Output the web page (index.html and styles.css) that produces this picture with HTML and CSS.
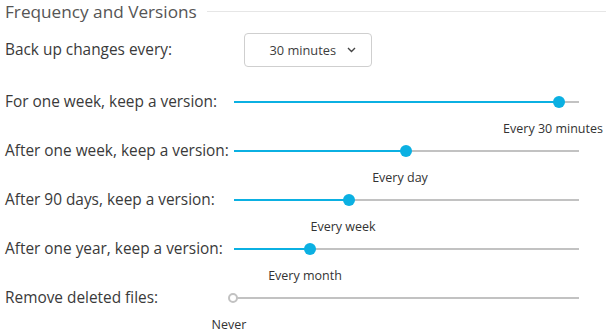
FILE: index.html
```html
<!DOCTYPE html>
<html lang="en">
<head>
  <meta charset="UTF-8">
  <title>Frequency and Versions</title>
  <link rel="stylesheet" href="styles.css">
</head>
<body>
  <main class="panel">
    <div class="head">
      <h2>Frequency and Versions</h2>
      <div class="rule"></div>
    </div>

    <div class="row row-select">
      <div class="label">Back up changes every:</div>
      <button class="select">
        <span>30 minutes</span>
        <svg width="9" height="6" viewBox="0 0 9 6"><path d="M1 1l3.5 3.5L8 1" fill="none" stroke="#444" stroke-width="1.4"/></svg>
      </button>
    </div>

    <div class="row">
      <div class="label">For one week, keep a version:</div>
      <div class="slider">
        <div class="fill" style="width: 325px"></div>
        <div class="thumb" style="left: 325px"></div>
        <div class="value" style="left: 319px">Every 30 minutes</div>
      </div>
    </div>

    <div class="row">
      <div class="label">After one week, keep a version:</div>
      <div class="slider">
        <div class="fill" style="width: 172px"></div>
        <div class="thumb" style="left: 172px"></div>
        <div class="value" style="left: 166px">Every day</div>
      </div>
    </div>

    <div class="row">
      <div class="label">After 90 days, keep a version:</div>
      <div class="slider">
        <div class="fill" style="width: 115px"></div>
        <div class="thumb" style="left: 115px"></div>
        <div class="value" style="left: 109px">Every week</div>
      </div>
    </div>

    <div class="row">
      <div class="label">After one year, keep a version:</div>
      <div class="slider">
        <div class="fill" style="width: 76px"></div>
        <div class="thumb" style="left: 76px"></div>
        <div class="value" style="left: 71px">Every month</div>
      </div>
    </div>

    <div class="row">
      <div class="label">Remove deleted files:</div>
      <div class="slider">
        <div class="thumb off" style="left: 0px"></div>
        <div class="value" style="left: -5px">Never</div>
      </div>
    </div>
  </main>
</body>
</html>
```

FILE: styles.css
```css
* {
  margin: 0;
  padding: 0;
  box-sizing: border-box;
}
body {
  background: #fff;
  font-family: "Open Sans", "Liberation Sans", sans-serif;
  color: #3a3a3a;
}
.panel {
  width: 606px;
  min-height: 336px;
  padding-left: 5px;
}
.head {
  height: 22px;
  display: flex;
  align-items: center;
  gap: 10px;
}
.head h2 {
  font-size: 17.2px;
  font-weight: 400;
  color: #555;
  white-space: nowrap;
}
.head .rule {
  flex: 1;
  height: 1px;
  background-color: #e6e6e6;
}
.row {
  height: 49px;
  display: flex;
  align-items: center;
}
.row-select {
  height: 55px;
}
.label {
  width: 229px;
  font-size: 15.4px;
  white-space: nowrap;
}
.select {
  margin-left: 10px;
  width: 128px;
  height: 34px;
  border: 1px solid #cfcfcf;
  border-radius: 4px;
  background: #fff;
  display: flex;
  align-items: center;
  justify-content: flex-end;
  gap: 11px;
  padding-right: 15px;
  font-family: inherit;
  font-size: 12.8px;
  color: #3d3d3d;
}
.slider {
  position: relative;
  width: 345px;
  height: 2px;
  background-color: #c2c2c2;
}
.fill {
  height: 2px;
  background-color: #0bb0e2;
}
.thumb {
  position: absolute;
  top: -5px;
  width: 12px;
  height: 12px;
  margin-left: -6px;
  border-radius: 50%;
  background-color: #0bb0e2;
}
.thumb.off {
  left: 0;
  width: 10px;
  height: 10px;
  top: -4px;
  margin-left: -6px;
  background-color: #fff;
  border: 2px solid #c2c2c2;
}
.value {
  position: absolute;
  top: 19px;
  transform: translateX(-50%);
  font-size: 12.5px;
  color: #333;
  white-space: nowrap;
}
```
